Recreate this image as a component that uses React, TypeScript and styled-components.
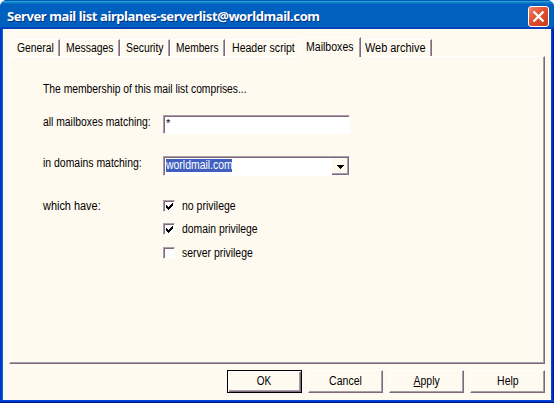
import React from 'react';
import styled, { createGlobalStyle, css } from 'styled-components';

const cream = '#fffaf0';
const dark = '#806880';
const mid = '#a6a0a4';

const Global = createGlobalStyle`
  * { box-sizing: border-box; }
  body { margin: 0; background: #fff; font: 12.5px/14px "Liberation Sans", Arial, sans-serif; color: #000; }
`;

const Window = styled.div`
  width: 554px;
  height: 403px;
  display: flex;
  flex-direction: column;
  overflow: hidden;
  border-radius: 7px 7px 0 0;
  background:
    linear-gradient(180deg, #0048d8 0 1px, #0030c8 1px 2px, #001890 2px) bottom / 100% 3px no-repeat,
    linear-gradient(90deg, #0030c4 0 1px, #0048d0 1px 2px, #0064c8 2px 3px, transparent 3px 551px, #0048d8 551px 552px, #0030c0 552px 553px, #001898 553px),
    #0038c8;
`;

const TitleBar = styled.header`
  height: 29px;
  flex: none;
  display: flex;
  align-items: center;
  justify-content: space-between;
  padding: 3px 5px 0 7px;
  background: linear-gradient(180deg, #0058b8 0 1px, #28a0d0 1px 2px, #1080c8 2px 3px, #0060c0 4px 27px, #0040b8 27px);
`;

const Title = styled.h1<{ $track: number }>`
  margin: 0;
  font: bold 13px/16px "Noto Sans", sans-serif;
  letter-spacing: ${(p) => p.$track}px;
  color: #fff;
  white-space: nowrap;
  text-shadow: 1px 1px 0 #003080;
`;

const CloseButton = styled.button`
  width: 21px;
  height: 21px;
  margin-top: 1px;
  padding: 0;
  border: 1px solid #fff;
  border-radius: 3px;
  background: linear-gradient(135deg, #f08868, #e05030 45%, #c83c18);
  svg { display: block; }
`;

const Body = styled.main`
  flex: none;
  width: 548px;
  height: 371px;
  margin-left: 3px;
  padding: 8px 6px 0;
  background: ${cream};
`;

const Tabs = styled.nav`
  height: 19px;
  display: flex;
  align-items: flex-end;
  padding-left: 2px;
`;

const Tab = styled.div<{ $w: number; $active?: boolean; $edge?: boolean; $pad?: number }>`
  width: ${(p) => p.$w}px;
  height: ${(p) => (p.$active ? 20 : 17)}px;
  margin-bottom: ${(p) => (p.$active ? -1 : 0)}px;
  padding: ${(p) => (p.$active ? 2 : 1)}px 0 0 ${(p) => p.$pad ?? 5}px;
  background: ${cream};
  border-top: 1px solid #fff;
  border-left: 1px solid #fff;
  ${(p) => p.$edge !== false && css`
    border-right: 1px solid ${dark};
    box-shadow: inset -1px 0 ${mid};
  `}
`;

/* Condensed UI lettering: $fit is the horizontal compression of the glyphs. */
const Text = styled.span<{ $fit: number; $center?: boolean }>`
  display: block;
  white-space: nowrap;
  transform: scaleX(${(p) => p.$fit * 0.96});
  transform-origin: ${(p) => (p.$center ? 'center' : 'left')};
`;

const Panel = styled.section`
  width: 536px;
  height: 308px;
  padding: 25px 0 0 33px;
  border: 1px solid #fff;
  border-right-color: ${dark};
  border-bottom-color: ${dark};
  box-shadow: inset -1px -1px ${mid};
`;

const Form = styled.div`
  display: grid;
  grid-template-columns: 120px 187px;
  grid-template-rows: 33px 41px 43px auto;
`;

const Intro = styled.div`
  grid-column: 1 / -1;
`;

const Label = styled.label`
  min-width: 0;
`;

const sunken = css`
  border: 1px solid #fff;
  border-top-color: ${mid};
  border-left-color: ${mid};
  box-shadow: inset 1px 1px ${dark};
  background: #fff;
`;

const Field = styled.div`
  ${sunken}
  height: 19px;
  padding: 1px 0 0 2px;
  font-size: 11px;
  line-height: 13px;
`;

const Combo = styled.div`
  ${sunken}
  height: 20px;
  padding: 1px 1px 0 2px;
  display: flex;
  justify-content: space-between;
  box-shadow: inset 1px 1px ${dark}, inset -1px 0 ${dark};
`;

const Selection = styled.div`
  height: 13px;
  width: 66px;
  margin-top: 1px;
  line-height: 13px;
  color: #fff;
  background: #4060c0;
`;

const Arrow = styled.div`
  width: 16px;
  height: 17px;
  border-right: 1px solid ${mid};
  border-bottom: 1px solid ${dark};
  box-shadow: inset 0 -1px ${mid};
  background: ${cream};
  padding: 7px 0 0 5px;
  svg { display: block; }
`;

const Checks = styled.div`
  display: grid;
  grid-template-rows: 23px 24px 12px;
  margin-top: 1px;
`;

const CheckRow = styled.div`
  display: flex;
  height: 12px;
  gap: 7px;
  line-height: 13px;
`;

const Box = styled.div`
  ${sunken}
  width: 12px;
  height: 12px;
  flex: none;
  svg { display: block; margin: 1px 0 0 1px; }
`;

const Actions = styled.footer`
  display: flex;
  justify-content: flex-end;
  gap: 6px;
  padding-top: 6px;
`;

const Button = styled.div<{ $primary?: boolean }>`
  width: 75px;
  height: 23px;
  display: flex;
  justify-content: center;
  padding-top: 3px;
  border: 1px solid #fff;
  border-right-color: ${dark};
  border-bottom-color: ${dark};
  box-shadow: inset -1px -1px ${mid};
  ${(p) => p.$primary && css`
    border-color: #000;
    box-shadow: inset 1px 1px #fff, inset -1px -1px ${dark}, inset -2px -2px ${mid};
  `}
`;

const tabs = [
  { name: 'General', w: 49, fit: 0.86 },
  { name: 'Messages', w: 60, fit: 0.87 },
  { name: 'Security', w: 50, fit: 0.865 },
  { name: 'Members', w: 55, fit: 0.85 },
  { name: 'Header script', w: 74, fit: 0.88, edge: false, pad: 6 },
  { name: 'Mailboxes', w: 62, fit: 0.88, active: true, pad: 6 },
  { name: 'Web archive', w: 71, fit: 0.91, pad: 3 },
];

const checks = [
  { name: 'no privilege', on: true, fit: 0.875 },
  { name: 'domain privilege', on: true, fit: 0.865 },
  { name: 'server privilege', on: false, fit: 0.87 },
];

const Tick = () => (
  <svg width="8" height="8" viewBox="0 0 8 8" shapeRendering="crispEdges">
    <path d="M1 3h1v1h1v1h1v-1h1v-1h1v-1h1v-1h1v3h-1v1h-1v1h-1v1h-1v1h-1v-1h-1v-1h-1z" />
  </svg>
);

export default function App() {
  return (
    <>
      <Global />
      <Window>
        <TitleBar>
          <Title $track={-0.41}>Server mail list airplanes-serverlist@worldmail.com</Title>
          <CloseButton aria-label="Close">
            <svg width="19" height="19" viewBox="0 0 19 19">
              <path d="M4.5 4.5l10 10M14.5 4.5l-10 10" stroke="#fff" strokeWidth="2.4" />
            </svg>
          </CloseButton>
        </TitleBar>
        <Body>
          <Tabs>
            {tabs.map((t) => (
              <Tab key={t.name} $w={t.w} $active={t.active} $edge={t.edge} $pad={t.pad}>
                <Text $fit={t.fit}>{t.name}</Text>
              </Tab>
            ))}
          </Tabs>
          <Panel>
            <Form>
              <Intro><Text $fit={0.86}>The membership of this mail list comprises...</Text></Intro>
              <Label><Text $fit={0.863}>all mailboxes matching:</Text></Label>
              <Field>*</Field>
              <Label><Text $fit={0.87}>in domains matching:</Text></Label>
              <Combo>
                <Selection><Text $fit={0.87}>worldmail.com</Text></Selection>
                <Arrow>
                  <svg width="7" height="4" viewBox="0 0 7 4" shapeRendering="crispEdges">
                    <path d="M0 0h7v1h-1v1h-1v1h-1v1h-1v-1h-1v-1h-1v-1h-1z" />
                  </svg>
                </Arrow>
              </Combo>
              <Label><Text $fit={0.91}>which have:</Text></Label>
              <Checks>
                {checks.map((c) => (
                  <CheckRow key={c.name}>
                    <Box>{c.on && <Tick />}</Box>
                    <Text $fit={c.fit}>{c.name}</Text>
                  </CheckRow>
                ))}
              </Checks>
            </Form>
          </Panel>
          <Actions>
            <Button $primary><Text $center $fit={0.83}>OK</Text></Button>
            <Button><Text $center $fit={0.88}>Cancel</Text></Button>
            <Button><Text $center $fit={0.87}><u>A</u>pply</Text></Button>
            <Button><Text $center $fit={0.87}>Help</Text></Button>
          </Actions>
        </Body>
      </Window>
    </>
  );
}
